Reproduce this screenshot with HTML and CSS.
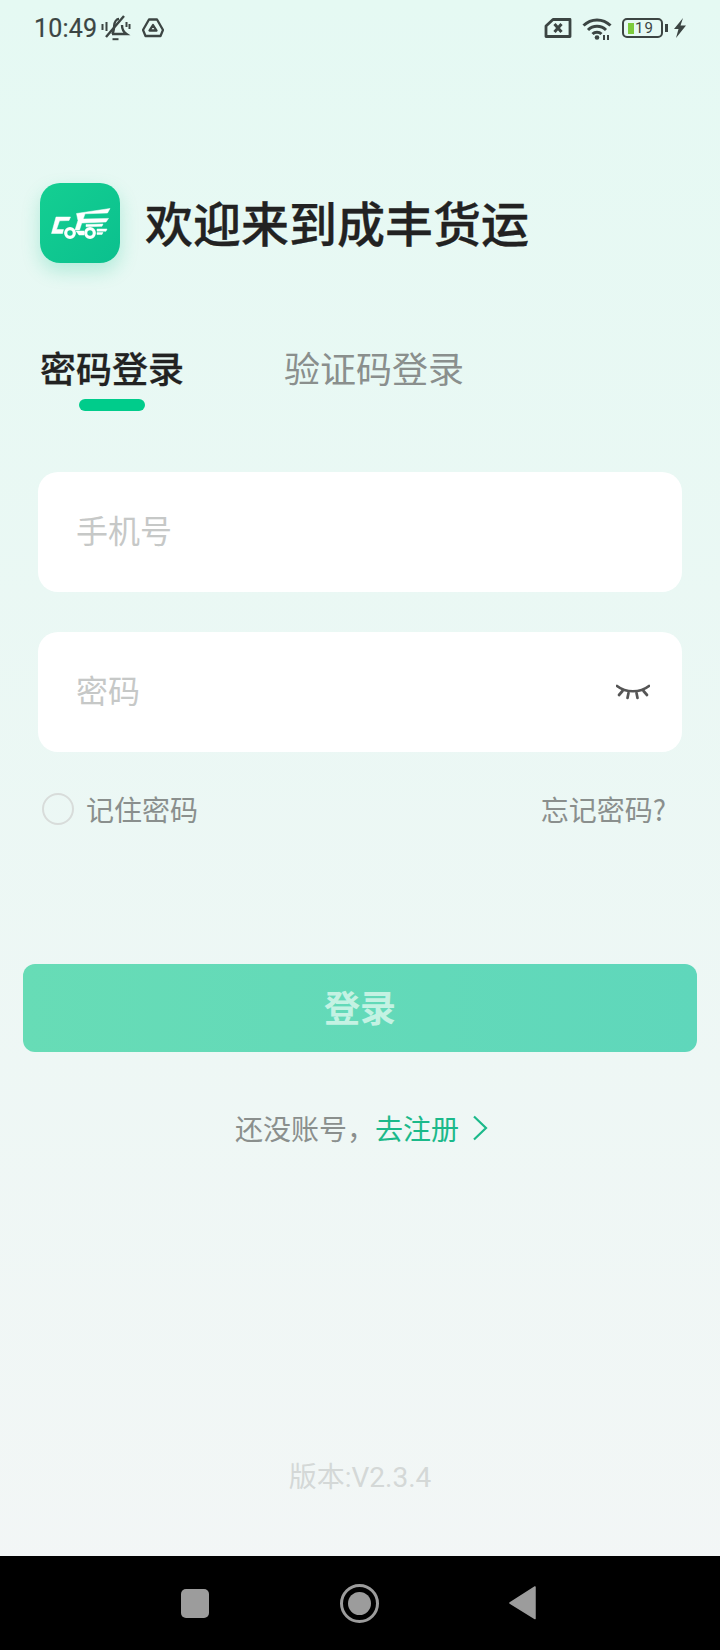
FILE: index.html
```html
<!DOCTYPE html>
<html lang="zh-CN">
<head>
  <meta charset="UTF-8">
  <meta name="viewport" content="width=device-width, initial-scale=1.0">
  <title>成丰货运</title>
  <link rel="stylesheet" href="styles.css">
</head>
<body>
  <div class="screen">
    <div class="status-bar">
      <div class="status-left">
        <span class="time">10:49</span>
        <svg class="ic-bell" width="30" height="26" viewBox="0 0 30 26" fill="none" stroke="#3c4543" stroke-width="2.400">
          <path d="M11 19h14.500c-3-2-4.500-5-4.500-9M11 19c2-2 2-5 2.200-8.500C13.500 7 15.500 4 18 4"/>
          <path d="M5 22 23 1"/>
          <path d="M11.500 24.200h6" stroke-width="2"/>
          <path d="M1.500 9v6M5.500 7v9M25.500 7v5M28.500 9v5" stroke-width="2"/>
        </svg>
        <svg class="ic-drive" width="22" height="20" viewBox="0 0 22 20" fill="none" stroke="#3c4543" stroke-width="2.300" stroke-linejoin="round">
          <path d="M7 1.500h8l6 10.500-2.500 6h-15L1 12z"/>
          <path d="M11 7l3.500 5.500h-7z"/>
        </svg>
      </div>
      <div class="status-right">
        <svg width="28" height="20" viewBox="0 0 28 20" fill="none" stroke="#3c4543" stroke-width="2.800" stroke-linejoin="round">
          <path d="M9 1.500h17v17H2V8z"/>
          <path d="M10.500 6l7 8M17.500 6l-7 8" stroke-width="3"/>
        </svg>
        <svg width="30" height="23" viewBox="0 0 30 23" fill="none" stroke="#3c4543" stroke-width="3">
          <path d="M1.500 8.500C9 1 21 1 28.500 8.500"/>
          <path d="M6 13c5-5 13-5 18 0"/>
          <path d="M10.500 17c2.500-2.500 6.500-2.500 9 0"/>
          <circle cx="15" cy="20.500" r="2.300" fill="#3c4543" stroke="none"/>
          <path d="M22 23v-5M26 23v-5" stroke-width="2"/>
        </svg>
        <div class="battery">
          <div class="battery-body"><span class="battery-fill"></span><span class="battery-num">19</span></div>
          <span class="battery-tip"></span>
        </div>
        <svg class="ic-bolt" width="12" height="20" viewBox="0 0 12 20"><path d="M9 0 0 11h4.500L2 20l10-12.500H6.500z" fill="#3c4543"/></svg>
      </div>
    </div>

    <main class="content">
      <div class="brand">
        <div class="logo">
          <svg width="80" height="80" viewBox="0 0 80 80" fill="#fff" stroke="#fff" stroke-width="0.500">
            <path d="M16 34h14.500l-1.500 3.500-9.500.3L16.500 46.500 23.500 46.500 22.500 50.500H11.500z"/>
            <path d="M36.500 30.500 70 25.500 67.500 30 45 30.800 43.200 36 68.500 35.400 66 39 41.800 40 39.500 47H35l3-9.500z"/>
            <circle cx="30" cy="50" r="4.300" fill="none" stroke-width="3.200"/>
            <circle cx="50" cy="50" r="4.300" fill="none" stroke-width="3.200"/>
            <path d="M36 48h8v4h-5zM46 41.500l17-.5-1 2.300-16 .5zM57 46h10l-1 2.200h-9zM57 49.500h6l-1 2h-5z"/>
          </svg>
        </div>
        <h1 class="title">欢迎来到成丰货运</h1>
      </div>

      <div class="tabs">
        <div class="tab tab-active">密码登录<span class="tab-line"></span></div>
        <div class="tab">验证码登录</div>
      </div>

      <form class="login-form">
        <div class="field"><span class="placeholder">手机号</span></div>
        <div class="field">
          <span class="placeholder">密码</span>
          <svg width="34" height="18" viewBox="0 0 34 18" fill="none" stroke="#555" stroke-width="2.700" stroke-linecap="round">
            <path d="M1 3c9 7 23 7 32 0"/>
            <path d="M3 12 6.500 8M11.500 15l1-5M21.500 15l-1-5M31 12l-3.500-4"/>
          </svg>
        </div>
        <div class="form-opts">
          <label class="remember"><span class="radio"></span>记住密码</label>
          <span class="forgot">忘记密码?</span>
        </div>
        <button type="button" class="login-btn">登录</button>
      </form>

      <div class="register">
        还没账号，<span class="register-link">去注册</span>
        <svg width="16" height="26" viewBox="0 0 16 26" fill="none" stroke="#1bb98a" stroke-width="2.200"><path d="M2 1.500 14 13 2 24.500"/></svg>
      </div>

      <div class="version">版本:V2.3.4</div>
    </main>

    <div class="nav-bar">
      <span class="nav-square"></span>
      <span class="nav-circle"><span class="nav-dot"></span></span>
      <svg width="28" height="34" viewBox="0 0 28 34"><path d="M26 1 1 17l25 15.500z" fill="#9c9c9c" stroke="#9c9c9c" stroke-width="1.500" stroke-linejoin="round"/></svg>
    </div>
  </div>
</body>
</html>
```

FILE: styles.css
```css
* {
  box-sizing: border-box;
}
body {
  margin: 0;
  font-family: "Noto Sans CJK SC", Roboto, sans-serif;
}
.screen {
  width: 720px;
  height: 1650px;
  display: flex;
  flex-direction: column;
  background: linear-gradient(180deg, #e5f9f3 0%, #f3f6f6 100%);
}

/* status bar */
.status-bar {
  height: 56px;
  padding: 0 34px;
  display: flex;
  justify-content: space-between;
  align-items: center;
}
.status-left, .status-right {
  display: flex;
  align-items: center;
}
.time {
  font-family: Roboto, sans-serif;
  font-size: 25px;
  letter-spacing: 0.2px;
  -webkit-text-stroke: 0.2px #3c4543;
  color: #3c4543;
}
.ic-bell {
  margin-left: 4px;
}
.ic-drive {
  margin-left: 11px;
}
.status-right {
  gap: 10px;
}
.battery {
  display: flex;
  align-items: center;
  gap: 2px;
}
.battery-body {
  width: 41px;
  height: 20px;
  border: 2px solid #3c4543;
  border-radius: 5px;
  display: flex;
  align-items: center;
  padding-left: 4px;
}
.battery-fill {
  width: 6px;
  height: 11px;
  background: #7ccb3c;
}
.battery-num {
  font-family: Roboto, sans-serif;
  font-size: 15px;
  letter-spacing: 1px;
  color: #3c4543;
  margin-left: 1px;
}
.battery-tip {
  width: 3px;
  height: 8px;
  background: #3c4543;
}
.ic-bolt {
  margin-left: -4px;
}

/* main */
.content {
  flex: 1;
  display: flex;
  flex-direction: column;
}
.brand {
  display: flex;
  align-items: center;
  gap: 25px;
  margin: 127px 0 0 40px;
}
.logo {
  width: 80px;
  height: 80px;
  border-radius: 20px;
  background: linear-gradient(135deg, #14cf92 0%, #0bc08e 100%);
  box-shadow: 0 8px 18px rgba(20, 200, 145, 0.25);
}
.logo svg {
  display: block;
}
.title {
  margin: 0;
  padding-bottom: 4px;
  font-size: 48px;
  font-weight: 500;
  -webkit-text-stroke: 0.3px #222;
  color: #222;
  line-height: 76px;
}
.tabs {
  display: flex;
  gap: 100px;
  margin: 79px 0 0 40px;
}
.tab {
  position: relative;
  font-size: 36px;
  line-height: 50px;
  color: #8a8f8d;
}
.tab-active {
  color: #222;
  font-weight: 500;
  -webkit-text-stroke: 0.3px #222;
}
.tab-line {
  position: absolute;
  left: 39px;
  top: 57px;
  width: 66px;
  height: 12px;
  border-radius: 6px;
  background: #00cc8b;
}
.login-form {
  display: flex;
  flex-direction: column;
  margin-top: 80px;
}
.field {
  width: 644px;
  height: 120px;
  margin: 0 0 40px 38px;
  padding: 0 32px 0 38px;
  background: #fff;
  border-radius: 20px;
  display: flex;
  justify-content: space-between;
  align-items: center;
}
.placeholder {
  margin-bottom: 6px;
  font-size: 32px;
  color: #c6c8c7;
}
.form-opts {
  display: flex;
  justify-content: space-between;
  align-items: center;
  margin: -3px 54px 0 42px;
  height: 40px;
  font-size: 28px;
  color: #8a8f8d;
}
.remember {
  display: flex;
  align-items: center;
  gap: 12px;
}
.radio {
  width: 32px;
  height: 32px;
  border: 2px solid #d8dcda;
  border-radius: 50%;
}
.login-btn {
  width: 674px;
  height: 88px;
  margin: 135px 0 0 23px;
  padding: 0 0 4px;
  border: 0;
  border-radius: 12px;
  background: linear-gradient(90deg, #67dcb6 0%, #5fd7bb 100%);
  font-family: inherit;
  font-size: 36px;
  font-weight: 700;
  color: #c4f2e3;
}
.register {
  display: flex;
  align-items: center;
  justify-content: center;
  margin-top: 54px;
  padding-left: 3px;
  height: 44px;
  font-size: 28px;
  color: #8a8f8d;
}
.register-link {
  color: #1bb98a;
}
.register svg {
  margin-left: 13px;
}
.version {
  margin-top: auto;
  margin-bottom: 56px;
  text-align: center;
  font-family: Roboto, "Noto Sans CJK SC", sans-serif;
  font-size: 28px;
  line-height: 44px;
  color: #d4d8d7;
}

/* bottom nav */
.nav-bar {
  height: 94px;
  background: #000;
  display: flex;
  align-items: center;
  justify-content: space-between;
  padding: 0 183px 0 181px;
}
.nav-square {
  width: 28px;
  height: 29px;
  border-radius: 5px;
  background: #9c9c9c;
}
.nav-circle {
  width: 39px;
  height: 39px;
  border: 3px solid #9c9c9c;
  border-radius: 50%;
  display: flex;
  align-items: center;
  justify-content: center;
}
.nav-dot {
  width: 23px;
  height: 23px;
  border-radius: 50%;
  background: #9c9c9c;
}
```
